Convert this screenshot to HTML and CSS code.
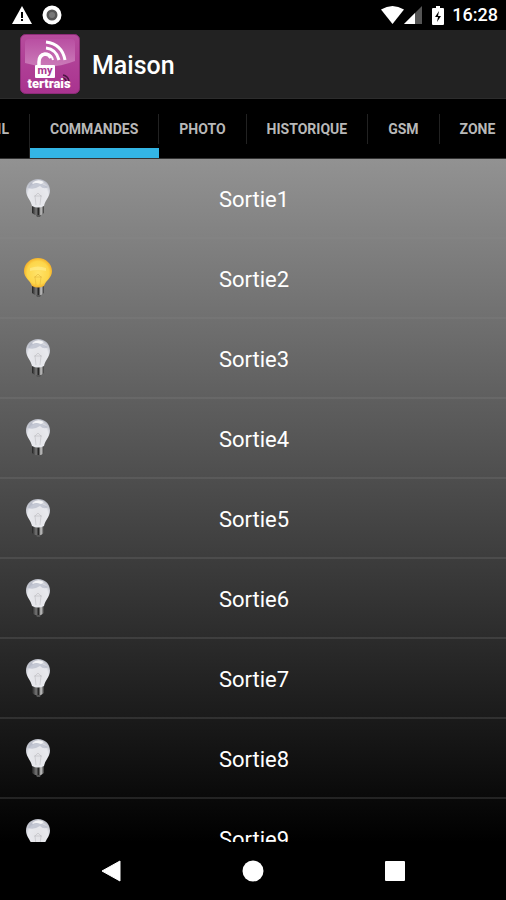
FILE: index.html
```
<!DOCTYPE html>
<html lang="fr">
<head>
    <meta charset="UTF-8">
    <meta name="viewport" content="width=device-width, initial-scale=1.0">
    <title>Maison</title>
    <link rel="stylesheet" href="styles.css">
</head>
<body>
    <!-- Symboles réutilisés par la liste -->
    <svg class="defs" aria-hidden="true">
        <defs>
            <radialGradient id="glassOff" cx="50%" cy="60%" r="60%">
                <stop offset="0" stop-color="#e2e2e6"/>
                <stop offset="0.7" stop-color="#e8e9ee"/>
                <stop offset="1" stop-color="#b4b7c2"/>
            </radialGradient>
            <radialGradient id="glassOn" cx="50%" cy="50%" r="55%">
                <stop offset="0" stop-color="#ffe36a"/>
                <stop offset="0.7" stop-color="#fdd64a"/>
                <stop offset="1" stop-color="#f0a420"/>
            </radialGradient>
            <linearGradient id="cap" x1="0" y1="0" x2="1" y2="0">
                <stop offset="0" stop-color="#222"/>
                <stop offset="0.35" stop-color="#777"/>
                <stop offset="0.55" stop-color="#222"/>
                <stop offset="0.75" stop-color="#ccc"/>
                <stop offset="1" stop-color="#333"/>
            </linearGradient>
            <symbol id="off" viewBox="0 0 28 40">
                <path d="M8 27h12v8l-3 2h-6l-3-2z" fill="url(#cap)"/>
                <path d="M12 37h5l-1 2h-3z" fill="#555"/>
                <path d="M14 1C7 1 2 6 2 12.500C2 19 7 22 8 28Q14 31 20 28C21 22 26 19 26 12.500C26 6 21 1 14 1z" fill="url(#glassOff)"/>
                <path d="M4 10Q6 4 10 4L18 6L24 9Q20 12 16 8Q10 12 4 10z" fill="#9298b0" opacity="0.4"/>
                <path d="M8 5Q14 0 20 4L17 6Q12 4 9 6z" fill="#fff" opacity="0.75"/>
                <path d="M12 27l-1-9 3-3 3 3-1 9M10 18h8" fill="none" stroke="#aaaab0" stroke-width="1" opacity="0.4"/>
            </symbol>
            <symbol id="on" viewBox="0 0 28 40">
                <path d="M8 27h12v8l-3 2h-6l-3-2z" fill="url(#cap)"/>
                <path d="M12 37h5l-1 2h-3z" fill="#555"/>
                <path d="M14 0C6 0 0 6 0 13C0 20 6 22 8 28Q14 31 20 28C22 22 28 20 28 13C28 6 22 0 14 0z" fill="url(#glassOn)"/>
                <path d="M6 10Q14 7 22 10V13Q14 11 6 13z" fill="#fff3a0" opacity="0.5"/>
                <path d="M12 27l-1-8 3-3 3 3-1 8M10 19h8" fill="none" stroke="#d8a830" stroke-width="1" opacity="0.4"/>
            </symbol>
        </defs>
    </svg>

    <div class="status">
        <svg width="20" height="18" viewBox="0 0 20 18">
            <path d="M10 0L20 18H0z" fill="#fff"/>
            <path d="M9 6h2v6H9zM9 13h2v2H9z" fill="#000"/>
        </svg>
        <svg width="20" height="20" viewBox="0 0 20 20">
            <circle cx="10" cy="10" r="7.500" fill="#555" stroke="#fff" stroke-width="4"/>
            <circle cx="10" cy="10" r="3" fill="#777"/>
        </svg>
        <div class="status-right">
            <svg width="23" height="18" viewBox="0 0 23 18">
                <path d="M0 3.500Q11.500 -3.500 23 3.500L11.500 18z" fill="#fff"/>
            </svg>
            <svg width="18" height="18" viewBox="0 0 18 18">
                <path d="M18 0v18H0z" fill="#555"/>
                <path d="M11 7v11H0z" fill="#fff"/>
            </svg>
            <svg class="battery" width="12" height="19" viewBox="0 0 12 19">
                <path d="M4 0h4v2h3q1 0 1 1v15q0 1-1 1H1q-1 0-1-1V3q0-1 1-1h3z" fill="#fff"/>
                <path d="M7 5L3 11h3l-1 5 4-6H6z" fill="#000"/>
            </svg>
            <span class="clock">16:28</span>
        </div>
    </div>

    <header class="header">
        <svg class="logo" width="60" height="60" viewBox="0 0 60 60">
            <defs>
                <linearGradient id="pink" x1="0" y1="0" x2="0" y2="1">
                    <stop offset="0" stop-color="#b64c9d"/>
                    <stop offset="1" stop-color="#a9338f"/>
                </linearGradient>
                <linearGradient id="shine" x1="0" y1="0" x2="0" y2="1">
                    <stop offset="0" stop-color="#b94fa2"/>
                    <stop offset="1" stop-color="#cb7bb9"/>
                </linearGradient>
            </defs>
            <rect x="0.500" y="0.500" width="59" height="59" rx="5" fill="url(#pink)" stroke="#8c2c78"/>
            <path d="M5 9q0-4 4-4h42q4 0 4 4v18Q30 37 5 29z" fill="url(#shine)"/>
            <path d="M19 32v-4q0-7 6-8q4 0 6 4" fill="none" stroke="#fff" stroke-width="3.500"/>
            <rect x="15" y="31" width="20" height="13" rx="1" fill="#fff"/>
            <g fill="none" stroke="#fff" stroke-width="3">
                <path d="M26 8Q42 10 45 26"/>
                <path d="M26 14Q36 15 39 26"/>
            </g>
            <path d="M27 20q5 1 6 6" fill="none" stroke="#fff" stroke-width="2"/>
            <path d="M43 41q5 1 6 6M43 44q3 1 3 3" fill="none" stroke="#4d1744" stroke-width="1.500"/>
            <text class="logo-my" x="25" y="40" text-anchor="middle">my</text>
            <text class="logo-name" x="29" y="54" text-anchor="middle">tertrais</text>
        </svg>
        <h1>Maison</h1>
    </header>

    <nav class="tabs">
        <a class="tab tab-first" href="#accueil"><span>ACCUEIL</span></a>
        <a class="tab active" href="#commandes"><span>COMMANDES</span></a>
        <a class="tab" href="#photo"><span>PHOTO</span></a>
        <a class="tab" href="#historique"><span>HISTORIQUE</span></a>
        <a class="tab" href="#gsm"><span>GSM</span></a>
        <a class="tab" href="#zone"><span>ZONE</span></a>
    </nav>

    <main class="list">
        <button class="row"><svg class="bulb"><use href="#off"/></svg><span>Sortie1</span></button>
        <button class="row"><svg class="bulb"><use href="#on"/></svg><span>Sortie2</span></button>
        <button class="row"><svg class="bulb"><use href="#off"/></svg><span>Sortie3</span></button>
        <button class="row"><svg class="bulb"><use href="#off"/></svg><span>Sortie4</span></button>
        <button class="row"><svg class="bulb"><use href="#off"/></svg><span>Sortie5</span></button>
        <button class="row"><svg class="bulb"><use href="#off"/></svg><span>Sortie6</span></button>
        <button class="row"><svg class="bulb"><use href="#off"/></svg><span>Sortie7</span></button>
        <button class="row"><svg class="bulb"><use href="#off"/></svg><span>Sortie8</span></button>
        <button class="row"><svg class="bulb"><use href="#off"/></svg><span>Sortie9</span></button>
    </main>

    <footer class="navbar">
        <button aria-label="Retour">
            <svg width="20" height="22" viewBox="0 0 20 22"><path d="M19 1v20L1 11z" fill="#fff" stroke="#fff" stroke-linejoin="round"/></svg>
        </button>
        <button aria-label="Accueil">
            <svg width="22" height="22" viewBox="0 0 22 22"><circle cx="11" cy="11" r="10.500" fill="#fff"/></svg>
        </button>
        <button aria-label="Applications">
            <svg width="20" height="20" viewBox="0 0 20 20"><rect width="20" height="20" rx="1" fill="#fff"/></svg>
        </button>
    </footer>
</body>
</html>
```
FILE: styles.css
```
* {
    box-sizing: border-box;
}
body {
    margin: 0;
    height: 100vh;
    display: flex;
    flex-direction: column;
    overflow: hidden;
    background: #000;
    color: #fff;
    font-family: Roboto, sans-serif;
}
svg {
    display: block;
    flex: none;
}
button {
    padding: 0;
    border: none;
    background: none;
    color: inherit;
    font-family: inherit;
    cursor: pointer;
}
.defs {
    position: absolute;
    width: 0;
    height: 0;
}

/* Barre d'état */
.status {
    flex: none;
    height: 30px;
    padding: 0 8px 0 12px;
    display: flex;
    align-items: center;
    gap: 10px;
}
.status-right {
    margin-left: auto;
    display: flex;
    align-items: center;
}
.battery {
    margin: 0 8px 0 10px;
}
.clock {
    font-size: 18px;
    font-weight: 500;
    line-height: 30px;
}

/* Titre */
.header {
    flex: none;
    height: 69px;
    padding: 4px 20px;
    display: flex;
    align-items: flex-start;
    gap: 12px;
    background: #222;
    border-bottom: 1px solid #2c2c2c;
}
.header h1 {
    margin: 0;
    font-size: 25px;
    font-weight: 500;
    line-height: 64px;
}
.logo-my {
    font: bold 11px Roboto, sans-serif;
    fill: #a9338f;
}
.logo-name {
    font: 900 13px Roboto, sans-serif;
    fill: #fff;
}

/* Onglets */
.tabs {
    flex: none;
    display: flex;
    height: 60px;
    overflow: hidden;
    border-bottom: 1px solid #333;
}
.tab {
    flex: none;
    padding-top: 15px;
    color: #b8b8b8;
    font-size: 14px;
    font-weight: 700;
    line-height: 30px;
    text-decoration: none;
}
.tab span {
    display: block;
    padding: 0 20px;
    border-right: 1px solid #222;
}
.tab-first {
    width: 30px;
    display: flex;
    justify-content: flex-end;
}
.tab.active {
    border-bottom: 10px solid #33b5e5;
}

/* Liste des sorties */
.list {
    flex: 1;
    min-height: 0;
    overflow: hidden;
    background: linear-gradient(#929292, #000);
}
.row {
    width: 100%;
    height: 80px;
    padding: 0 24px;
    display: grid;
    grid-template-columns: 28px 1fr 28px;
    align-items: center;
    border-bottom: 2px solid rgba(140, 140, 140, 0.2);
    font-size: 22px;
    line-height: 30px;
}
.row span {
    padding: 4px 0 0 2px;
}
.bulb {
    width: 28px;
    height: 40px;
}

/* Boutons Android */
.navbar {
    flex: none;
    height: 58px;
    padding: 0 40px;
    display: grid;
    grid-template-columns: repeat(3, 1fr);
}
.navbar button {
    display: flex;
    align-items: center;
    justify-content: center;
}
```
